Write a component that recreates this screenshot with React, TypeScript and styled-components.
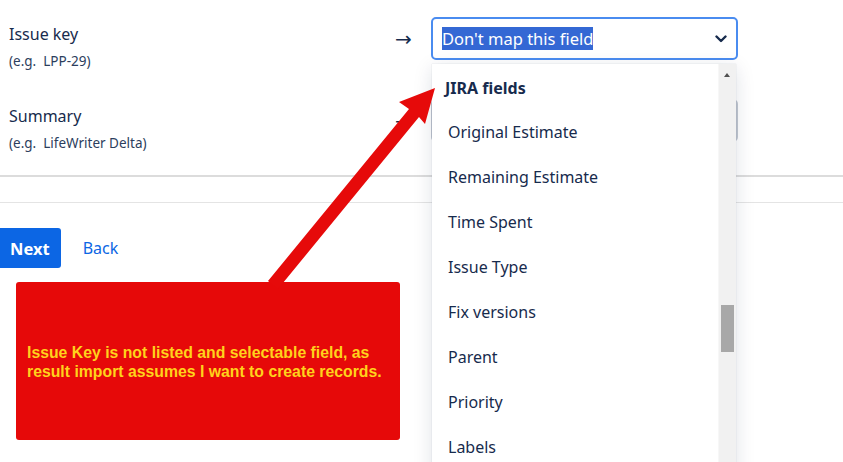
import React from "react";
import styled, { createGlobalStyle } from "styled-components";

const Global = createGlobalStyle`
  html, body { margin: 0; padding: 0; background: #fff; }
  body { font-family: "Noto Sans", "Open Sans", sans-serif; color: #172b4d; }
`;

const Page = styled.div`
  position: relative;
  width: 843px;
  height: 462px;
  overflow: hidden;
  background: #fff;
`;

const Fields = styled.div`
  display: flex;
  flex-direction: column;
  gap: 29px;
  padding: 17px 0 0 9px;
`;

const Row = styled.div`
  display: grid;
  grid-template-columns: 386px 36px 307px;
  align-items: start;
`;

const LabelCol = styled.div`
  display: flex;
  flex-direction: column;
  padding-top: 6px;
`;

const Label = styled.div`
  font-size: 16px;
  line-height: 22px;
  color: #172b4d;
`;

const Hint = styled.div`
  margin-top: 7px;
  font-size: 13.5px;
  line-height: 18px;
  color: #2c3e5d;
`;

const MapArrow = styled.div`
  height: 43px;
  display: flex;
  align-items: center;
  font-family: "DejaVu Sans", sans-serif;
  font-size: 20px;
  color: #172b4d;
`;

const Select = styled.div<{ $focused?: boolean }>`
  box-sizing: border-box;
  height: 43px;
  border: 2px solid ${(p) => (p.$focused ? "#4a8cf0" : "#c1c7d0")};
  border-radius: 5px;
  display: flex;
  align-items: center;
  justify-content: space-between;
  padding: 0 9px 0 9px;
`;

const Selected = styled.span`
  background: #3468d4;
  color: #fff;
  font-size: 16.5px;
  line-height: 23px;
`;

const Divider = styled.div<{ $thick?: boolean }>`
  height: ${(p) => (p.$thick ? "2px" : "1px")};
  background: ${(p) => (p.$thick ? "#dcdcdc" : "#e4e4e4")};
  margin-top: ${(p) => (p.$thick ? "23px" : "25px")};
`;

const Actions = styled.div`
  display: flex;
  align-items: center;
  gap: 22px;
  margin: 25px 0 0 -4px;
`;

const PrimaryButton = styled.div`
  height: 40px;
  padding: 0 11px 0 14px;
  display: flex;
  align-items: center;
  background: #0c66e4;
  color: #fff;
  font-weight: 700;
  font-size: 16.5px;
  border-radius: 3px;
`;

const LinkButton = styled.div`
  color: #0c66e4;
  font-size: 16px;
`;

const Callout = styled.div`
  box-sizing: border-box;
  margin: 14px 0 0 16px;
  width: 384px;
  height: 158px;
  background: #e60909;
  border-radius: 3px;
  display: flex;
  align-items: center;
  padding: 2px 0 0 11px;
  font-family: "Liberation Sans", Arial, sans-serif;
  font-weight: 700;
  font-size: 15.8px;
  line-height: 19px;
  color: #ffd21c;
`;

const Menu = styled.div`
  position: absolute;
  left: 432px;
  top: 64px;
  width: 304px;
  height: 420px;
  display: flex;
  background: #fff;
  box-shadow: 0 4px 18px rgba(9, 30, 66, 0.13), 0 0 1px rgba(9, 30, 66, 0.2);
`;

const MenuList = styled.div`
  flex: 1;
  padding-top: 2px;
`;

const GroupHeader = styled.div`
  height: 43px;
  display: flex;
  align-items: center;
  padding-left: 13px;
  font-weight: 700;
  font-size: 16px;
  color: #172b4d;
`;

const Option = styled.div`
  height: 45px;
  display: flex;
  align-items: center;
  padding-left: 16px;
  font-size: 16px;
  color: #172b4d;
`;

const Scrollbar = styled.div`
  position: relative;
  width: 17px;
  background: #f1f1f1;
  border-left: 1px solid #f7f7f7;
`;

const ScrollUp = styled.div`
  position: absolute;
  top: 9px;
  left: 5px;
  width: 0;
  height: 0;
  border-left: 3.5px solid transparent;
  border-right: 3.5px solid transparent;
  border-bottom: 4px solid #505050;
`;

const Thumb = styled.div`
  position: absolute;
  top: 241px;
  left: 2px;
  width: 13px;
  height: 47px;
  background: #a8a8a8;
`;

const Annotation = styled.svg`
  position: absolute;
  left: 0;
  top: 0;
  pointer-events: none;
`;

const Chevron = () => (
  <svg width="12" height="8" viewBox="0 0 12 8">
    <path d="M1.5 1.5 L6 6 L10.5 1.5" fill="none" stroke="#172b4d" strokeWidth="2.4" strokeLinecap="round" strokeLinejoin="round" />
  </svg>
);

const options = [
  "Original Estimate",
  "Remaining Estimate",
  "Time Spent",
  "Issue Type",
  "Fix versions",
  "Parent",
  "Priority",
  "Labels",
];

export default function App() {
  return (
    <Page>
      <Global />
      <Fields>
        <Row>
          <LabelCol>
            <Label>Issue key</Label>
            <Hint>(e.g.&nbsp; LPP-29)</Hint>
          </LabelCol>
          <MapArrow>→</MapArrow>
          <Select $focused>
            <Selected>Don't map this field</Selected>
            <Chevron />
          </Select>
        </Row>
        <Row>
          <LabelCol>
            <Label>Summary</Label>
            <Hint>(e.g.&nbsp; LifeWriter Delta)</Hint>
          </LabelCol>
          <MapArrow>→</MapArrow>
          <Select>
            <span />
            <Chevron />
          </Select>
        </Row>
      </Fields>
      <Divider $thick />
      <Divider />
      <Actions>
        <PrimaryButton>Next</PrimaryButton>
        <LinkButton>Back</LinkButton>
      </Actions>
      <Callout>
        <div>
          Issue Key is not listed and selectable field, as
          <br />
          result import assumes I want to create records.
        </div>
      </Callout>
      <Menu>
        <MenuList>
          <GroupHeader>JIRA fields</GroupHeader>
          {options.map((o) => (
            <Option key={o}>{o}</Option>
          ))}
        </MenuList>
        <Scrollbar>
          <ScrollUp />
          <Thumb />
        </Scrollbar>
      </Menu>
      <Annotation width="843" height="462" viewBox="0 0 843 462">
        <polygon
          points="268,281 409,109 399,102 435,88 425,124 419,117 278,289"
          fill="#e60a0a"
        />
      </Annotation>
    </Page>
  );
}
